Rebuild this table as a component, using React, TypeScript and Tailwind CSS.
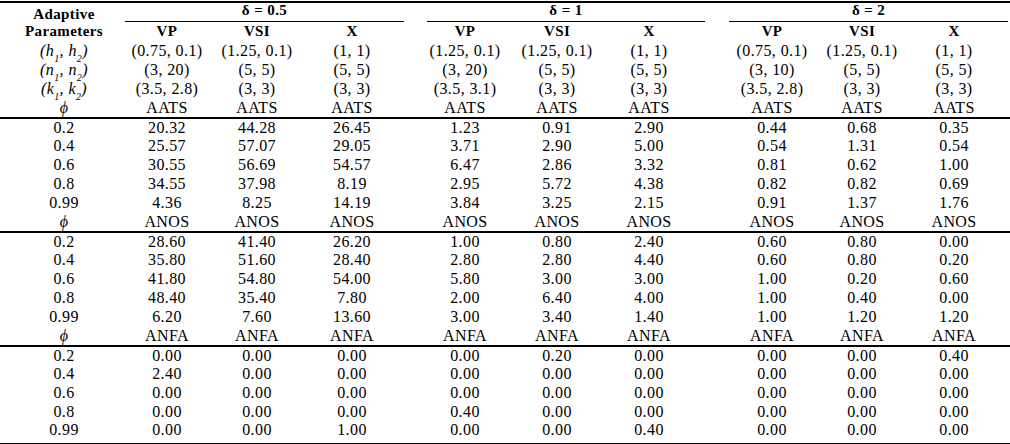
import React from "react";

type Block = { label: string; rows: [string, string[]][] };

const sub = "text-[10px] align-[-3px]";

const params: [React.ReactNode, string[]][] = [
  [
    <>
      (h<sub className={sub}>1</sub>, h<sub className={sub}>2</sub>)
    </>,
    ["(0.75, 0.1)", "(1.25, 0.1)", "(1, 1)", "(1.25, 0.1)", "(1.25, 0.1)", "(1, 1)", "(0.75, 0.1)", "(1.25, 0.1)", "(1, 1)"],
  ],
  [
    <>
      (n<sub className={sub}>1</sub>, n<sub className={sub}>2</sub>)
    </>,
    ["(3, 20)", "(5, 5)", "(5, 5)", "(3, 20)", "(5, 5)", "(5, 5)", "(3, 10)", "(5, 5)", "(5, 5)"],
  ],
  [
    <>
      (k<sub className={sub}>1</sub>, k<sub className={sub}>2</sub>)
    </>,
    ["(3.5, 2.8)", "(3, 3)", "(3, 3)", "(3.5, 3.1)", "(3, 3)", "(3, 3)", "(3.5, 2.8)", "(3, 3)", "(3, 3)"],
  ],
];

const blocks: Block[] = [
  {
    label: "AATS",
    rows: [
      ["0.2", ["20.32", "44.28", "26.45", "1.23", "0.91", "2.90", "0.44", "0.68", "0.35"]],
      ["0.4", ["25.57", "57.07", "29.05", "3.71", "2.90", "5.00", "0.54", "1.31", "0.54"]],
      ["0.6", ["30.55", "56.69", "54.57", "6.47", "2.86", "3.32", "0.81", "0.62", "1.00"]],
      ["0.8", ["34.55", "37.98", "8.19", "2.95", "5.72", "4.38", "0.82", "0.82", "0.69"]],
      ["0.99", ["4.36", "8.25", "14.19", "3.84", "3.25", "2.15", "0.91", "1.37", "1.76"]],
    ],
  },
  {
    label: "ANOS",
    rows: [
      ["0.2", ["28.60", "41.40", "26.20", "1.00", "0.80", "2.40", "0.60", "0.80", "0.00"]],
      ["0.4", ["35.80", "51.60", "28.40", "2.80", "2.80", "4.40", "0.60", "0.80", "0.20"]],
      ["0.6", ["41.80", "54.80", "54.00", "5.80", "3.00", "3.00", "1.00", "0.20", "0.60"]],
      ["0.8", ["48.40", "35.40", "7.80", "2.00", "6.40", "4.00", "1.00", "0.40", "0.00"]],
      ["0.99", ["6.20", "7.60", "13.60", "3.00", "3.40", "1.40", "1.00", "1.20", "1.20"]],
    ],
  },
  {
    label: "ANFA",
    rows: [
      ["0.2", ["0.00", "0.00", "0.00", "0.00", "0.20", "0.00", "0.00", "0.00", "0.40"]],
      ["0.4", ["2.40", "0.00", "0.00", "0.00", "0.00", "0.00", "0.00", "0.00", "0.00"]],
      ["0.6", ["0.00", "0.00", "0.00", "0.00", "0.00", "0.00", "0.00", "0.00", "0.00"]],
      ["0.8", ["0.00", "0.00", "0.00", "0.40", "0.00", "0.00", "0.00", "0.00", "0.00"]],
      ["0.99", ["0.00", "0.00", "1.00", "0.00", "0.00", "0.40", "0.00", "0.00", "0.00"]],
    ],
  },
];

// label, VP VSI X, gap, VP VSI X, gap, VP VSI X
const widths = [128, 78, 102, 88, 24, 90, 94, 90, 24, 108, 72, 112];

// nine values spread over the three groups, with empty gap cells between
function Values({ vals, rule }: { vals: React.ReactNode[]; rule?: boolean }) {
  const b = rule ? "border-b-2 border-black" : "";
  const cells: React.ReactNode[] = [];
  vals.forEach((v, i) => {
    if (i === 3 || i === 6) cells.push(<td key={"g" + i} className={b} />);
    cells.push(
      <td key={i} className={`text-center whitespace-nowrap p-0 ${b}`}>
        {v}
      </td>
    );
  });
  return <>{cells}</>;
}

export default function App() {
  return (
    <div
      className="w-[1010px] h-[444px] bg-white pt-px text-black text-[16px] tracking-[0.4px] leading-none"
      style={{ fontFamily: "'Liberation Serif', 'Times New Roman', serif" }}
    >
      <table className="table-fixed border-collapse w-[1010px] border-t-2 border-black">
        <colgroup>
          {widths.map((w, i) => (
            <col key={i} style={{ width: w }} />
          ))}
        </colgroup>
        <tbody>
          {/* header */}
          <tr className="h-[19.5px] font-bold text-[15px]">
            <td className="text-center p-0 align-bottom">Adaptive</td>
            <td colSpan={3} className="p-0 align-bottom">
              <div className="ml-[-3px] mr-[-8px] border-b-[1.5px] border-black text-center pb-[3px]">δ = 0.5</div>
            </td>
            <td />
            <td colSpan={3} className="p-0 align-bottom">
              <div className="ml-[7px] mr-[-11px] border-b-[1.5px] border-black text-center pb-[3px]">δ = 1</div>
            </td>
            <td />
            <td colSpan={3} className="p-0 align-bottom">
              <div className="ml-[11px] mr-[2px] border-b-[1.5px] border-black text-center pb-[3px]">δ = 2</div>
            </td>
          </tr>
          <tr className="h-[19.5px] font-bold text-[15px]">
            <td className="text-center p-0">Parameters</td>
            <Values vals={["VP", "VSI", "X", "VP", "VSI", "X", "VP", "VSI", "X"]} />
          </tr>
          {params.map(([label, vals], i) => (
            <tr key={i} className="h-[19px]">
              <td className="text-center p-0 italic">{label}</td>
              <Values vals={vals} />
            </tr>
          ))}
          {blocks.map((blk, bi) => (
            <React.Fragment key={blk.label}>
              <tr className="h-[19px]">
                <td className="text-center p-0 italic border-b-2 border-black">ϕ</td>
                <Values vals={Array(9).fill(blk.label)} rule />
              </tr>
              {blk.rows.map(([phi, vals], ri) => {
                const rule = bi === blocks.length - 1 && ri === blk.rows.length - 1;
                return (
                  <tr key={phi} className={rule ? "h-[22px] align-top" : "h-[19px]"}>
                    <td className={`text-center p-0 ${rule ? "border-b-2 border-black" : ""}`}>{phi}</td>
                    <Values vals={vals} rule={rule} />
                  </tr>
                );
              })}
            </React.Fragment>
          ))}
        </tbody>
      </table>
    </div>
  );
}
